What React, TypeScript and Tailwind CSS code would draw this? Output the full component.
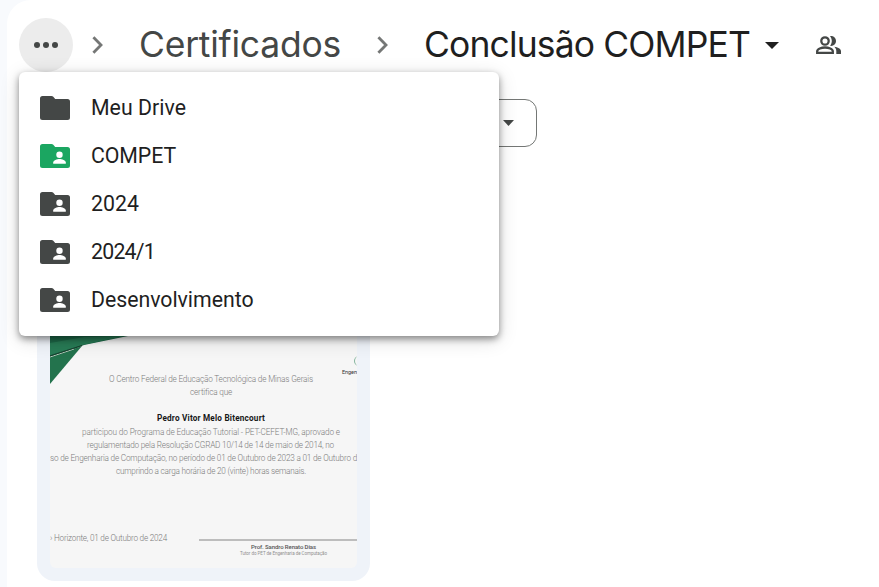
import { useLayoutEffect, useRef, useState } from "react";

/** Single line of text whose letter spacing is adjusted to fill a given width. */
function Fit({ text, width, className = "" }: { text: string; width: number; className?: string }) {
  const ref = useRef<HTMLSpanElement>(null);
  const [spacing, setSpacing] = useState(0);
  useLayoutEffect(() => {
    if (ref.current) {
      const natural = ref.current.getBoundingClientRect().width - spacing * text.length;
      setSpacing((width - natural) / text.length);
    }
  }, [text, width]);
  return (
    <span ref={ref} className={`inline-block whitespace-pre ${className}`} style={{ letterSpacing: spacing }}>
      {text}
    </span>
  );
}

function Chevron() {
  return (
    <svg className="h-[18px] w-[12px] shrink-0" viewBox="0 0 12 18" fill="none" stroke="#757776" strokeWidth="2.8">
      <path d="M1.4 1.3 9 9 1.4 16.7" />
    </svg>
  );
}

function FolderIcon({ shared, className }: { shared: boolean; className: string }) {
  return (
    <svg className={`h-6 w-[30px] shrink-0 ${className}`} viewBox="0 0 30 24">
      <path fill="currentColor" d="M2.5 0h9c.8 0 1.3.2 1.8.7L15.2 3H27.5A2.5 2.5 0 0 1 30 5.5v16a2.5 2.5 0 0 1-2.5 2.5h-25A2.5 2.5 0 0 1 0 21.500v-19A2.500 2.500 0 0 1 2.500 0Z" />
      {shared && (
        <g fill="#fff">
          <circle cx="19.500" cy="10.700" r="3.200" />
          <path d="M13.200 19.700v-1.200c0-2.100 3.900-3.400 6.300-3.400s6.300 1.300 6.300 3.400v1.200Z" />
        </g>
      )}
    </svg>
  );
}

const folders = [
  { name: "Meu Drive", width: 95, shared: false, color: "text-[#444746]" },
  { name: "COMPET", width: 85, shared: true, color: "text-[#1ba661]" },
  { name: "2024", width: 48, shared: true, color: "text-[#444746]" },
  { name: "2024/1", width: 64, shared: true, color: "text-[#444746]" },
  { name: "Desenvolvimento", width: 162.5, shared: true, color: "text-[#444746]" },
];

function FolderMenu() {
  return (
    <ul className="absolute top-[72px] left-3 z-10 h-[264px] w-[480px] rounded-md bg-white py-3 font-[Roboto,sans-serif] text-[21.3px] text-[#1f1f1f] shadow-[0_3px_7px_rgba(0,0,0,0.42),0_4px_20px_rgba(0,0,0,0.14)]">
      {folders.map((f) => (
        <li key={f.name} className="flex h-12 items-center gap-[21px] pl-[21px]">
          <FolderIcon shared={f.shared} className={f.color} />
          <Fit text={f.name} width={f.width} className="-mt-px" />
        </li>
      ))}
    </ul>
  );
}

function Breadcrumbs() {
  return (
    <header className="flex h-[90px] items-center pl-3 font-[Inter,sans-serif] text-[35.5px] leading-none">
      <button className="flex size-[54px] shrink-0 items-center justify-center gap-[3px] rounded-full bg-[#ececec]">
        <span className="size-1.5 rounded-full bg-[#444746]" />
        <span className="size-1.5 rounded-full bg-[#444746]" />
        <span className="size-1.5 rounded-full bg-[#444746]" />
      </button>
      <div className="ml-[19px] flex items-center">
        <Chevron />
      </div>
      <div className="ml-[35px] w-[203px]">
        <Fit text="Certificados" width={202} className="text-[#444746]" />
      </div>
      <div className="ml-[35px] flex items-center">
        <Chevron />
      </div>
      <div className="ml-[35px] w-[327px]">
        <Fit text="Conclusão COMPET" width={326} className="text-[#1f1f1f]" />
      </div>
      <svg className="ml-[14px] h-[7px] w-[14px] shrink-0" viewBox="0 0 14 7" fill="#1f1f1f">
        <path d="M0 0h14L7 7Z" />
      </svg>
      <svg className="-mt-px ml-[37px] h-[18px] w-[25px] shrink-0" viewBox="0 0 25 18" fill="none">
        <circle cx="9" cy="5" r="3.700" stroke="#444746" strokeWidth="2.300" />
        <path stroke="#444746" strokeWidth="2.300" d="M1.200 16.900v-1.600c0-2.400 4.300-3.800 7.800-3.800s7.800 1.400 7.800 3.800v1.600Z" />
        <path fill="#444746" d="M14 .2c3.300-.7 6 1.700 6 4.800s-2.700 5.500-6 4.800c2.400-2.600 2.400-7 0-9.600ZM18.300 10.800c3.500.5 6.700 2 6.700 4.500V18h-4.700v-2.800c0-1.900-.7-3.300-2-4.400Z" />
      </svg>
    </header>
  );
}

const bodyLines = [
  { text: "participou do Programa de Educação Tutorial - PET-CEFET-MG, aprovado e", width: 258, indent: "pl-[32px]" },
  { text: "regulamentado pela Resolução CGRAD 10/14 de 14 de maio de 2014, no", width: 247, indent: "pl-[37px]" },
  { text: "so de Engenharia de Computação, no período de 01 de Outubro de 2023 a 01 de Outubro d", width: 307, indent: "pl-0" },
  { text: "cumprindo a carga horária de 20 (vinte) horas semanais.", width: 190, indent: "pl-[66px]" },
];

function Certificate() {
  return (
    <div className="relative h-[268px] w-[307px] overflow-hidden rounded-md bg-[#f6f6f6] pt-[67px] font-[Roboto,sans-serif] text-[8.200px] leading-[13px] font-light text-[#7c7c7c]">
      <svg className="absolute top-0 left-0 h-[90px] w-[90px]" viewBox="0 0 90 90">
        <path fill="#1d6848" d="M0 0h90v34L78 36 34 45 0 59Z" />
        <path fill="#287b55" d="M0 43 34 37l40-1-42 9L0 55Z" />
        <path fill="#23734d" d="M0 57 32 46 0 84Z" />
        <path stroke="#b9cabd" strokeWidth="1" fill="none" d="M0 57 24 49" />
        <path stroke="#173f2d" strokeWidth="1" fill="none" d="M0 56 32 45.500" />
      </svg>
      <div className="flex h-[6px] justify-end">
        <span className="-mt-[11px] -mr-[2px] h-[10px] w-[5px] rounded-l-full border-l border-[#82b39c]" />
      </div>
      <div className="-mt-[5px] flex h-2 justify-end text-[5.500px] leading-[8px] font-normal text-[#333]">
        <Fit text="Engen" width={15} />
      </div>
      <div className="-mt-[3px] flex h-[13px] pl-[59px]">
        <Fit text="O Centro Federal de Educação Tecnológica de Minas Gerais" width={204} />
      </div>
      <div className="flex h-[13px] pl-[140px]">
        <Fit text="certifica que" width={42} />
      </div>
      <div className="mt-[13px] flex h-[13px] pl-[107px] font-bold text-[#171717]">
        <Fit text="Pedro Vitor Melo Bitencourt" width={108} />
      </div>
      <div className="mt-px">
        {bodyLines.map((l) => (
          <div key={l.text} className={`flex h-[13px] ${l.indent}`}>
            <Fit text={l.text} width={l.width} />
          </div>
        ))}
      </div>
      <div className="mt-[54px] flex h-[13px] items-center gap-[32px]">
        <Fit text="› Horizonte, 01 de Outubro de 2024" width={117} />
        <span className="mt-[2px] h-[2px] flex-1 bg-[#bdbdbd]" />
      </div>
      <div className="-mt-[2px] flex flex-col pl-[190px] leading-[7px]">
        <Fit text="Prof. Sandro Renato Dias" width={65} className="ml-[11px] self-start text-[6px] font-medium text-[#555]" />
        <Fit text="Tutor do PET de Engenharia de Computação" width={87} className="self-start text-[4.500px] font-normal text-[#909090]" />
      </div>
    </div>
  );
}

export default function App() {
  return (
    <div className="h-[587px] w-[879px] overflow-hidden bg-[#f8fafd] pl-[7px]">
      <main className="relative h-full rounded-tl-[24px] bg-white">
        <Breadcrumbs />
        <FolderMenu />
        <div className="mt-[9px] ml-[30px] flex h-12 w-[500px] items-center justify-end rounded-xl border border-[#747775] pr-[22px]">
          <svg className="h-[6px] w-[11px]" viewBox="0 0 11 6" fill="#444746">
            <path d="M0 0h11L5.500 6Z" />
          </svg>
        </div>
        <section className="mt-[93px] ml-[30px] h-[341px] w-[333px] rounded-[18px] bg-[#eff3f9] px-[13px] pt-[60px]">
          <Certificate />
        </section>
      </main>
    </div>
  );
}
